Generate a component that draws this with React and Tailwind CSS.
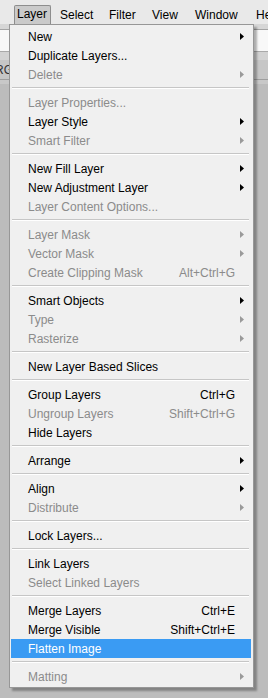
const font = { fontFamily: '"Liberation Sans", Arial, sans-serif' };

const groups = [
  [
    { label: 'New', sub: true },
    { label: 'Duplicate Layers...' },
    { label: 'Delete', sub: true, off: true },
  ],
  [
    { label: 'Layer Properties...', off: true },
    { label: 'Layer Style', sub: true },
    { label: 'Smart Filter', sub: true, off: true },
  ],
  [
    { label: 'New Fill Layer', sub: true },
    { label: 'New Adjustment Layer', sub: true },
    { label: 'Layer Content Options...', off: true },
  ],
  [
    { label: 'Layer Mask', sub: true, off: true },
    { label: 'Vector Mask', sub: true, off: true },
    { label: 'Create Clipping Mask', keys: 'Alt+Ctrl+G', off: true },
  ],
  [
    { label: 'Smart Objects', sub: true },
    { label: 'Type', sub: true, off: true },
    { label: 'Rasterize', sub: true, off: true },
  ],
  [{ label: 'New Layer Based Slices' }],
  [
    { label: 'Group Layers', keys: 'Ctrl+G' },
    { label: 'Ungroup Layers', keys: 'Shift+Ctrl+G', off: true },
    { label: 'Hide Layers' },
  ],
  [{ label: 'Arrange', sub: true }],
  [
    { label: 'Align', sub: true },
    { label: 'Distribute', sub: true, off: true },
  ],
  [{ label: 'Lock Layers...' }],
  [
    { label: 'Link Layers' },
    { label: 'Select Linked Layers', off: true },
  ],
  [
    { label: 'Merge Layers', keys: 'Ctrl+E' },
    { label: 'Merge Visible', keys: 'Shift+Ctrl+E' },
    { label: 'Flatten Image', active: true },
  ],
  [{ label: 'Matting', sub: true, off: true }],
];

function Arrow({ off }) {
  return (
    <svg width="4" height="7" viewBox="0 0 4 7">
      <polygon points="0,0 4,3.5 0,7" fill={off ? '#9a9a9a' : '#000'} />
    </svg>
  );
}

function Item({ item }) {
  const color = item.active ? 'text-white' : item.off ? 'text-[#8b8b8b]' : 'text-black';
  return (
    <div
      className={`flex items-center h-[19px] pl-[17px] pr-[7px] ml-[1px] mr-[2px] text-[12px] ${color} ${
        item.active ? 'bg-[#3a9bf3]' : ''
      }`}
    >
      <span className="flex-1 whitespace-nowrap">{item.label}</span>
      {item.keys && <span className="whitespace-nowrap">{item.keys}</span>}
      <div className="w-[9px] flex justify-end">{item.sub && <Arrow off={item.off} />}</div>
    </div>
  );
}

export default function App() {
  return (
    <div className="relative w-[268px] h-[698px] overflow-hidden bg-[#bcbcbc]" style={font}>
      {/* menu bar */}
      <div className="flex h-[24px] bg-[#e9e9e9] text-[12px] text-black">
        <div className="shrink-0 ml-[14px] mt-[5px] w-[37px] h-[19px] pl-[2px] bg-[#cacaca] border border-b-0 border-[#8d8d8d] rounded-t-[2px] leading-[17px]">
          Layer
        </div>
        <div className="shrink-0 ml-[9px] w-[49px] pt-[6px]">Select</div>
        <div className="shrink-0 w-[43px] pt-[6px]">Filter</div>
        <div className="shrink-0 w-[43px] pt-[6px]">View</div>
        <div className="shrink-0 w-[61px] pt-[6px]">Window</div>
        <div className="shrink-0 pt-[6px] whitespace-nowrap">Help</div>
      </div>

      {/* panels behind the menu */}
      <div className="h-[6px] bg-[#d6d6d6] border-b border-[#a4a4a4]" />
      <div className="h-[22px] bg-[#f8f8f8] border-b border-[#a9a9a9]" />
      <div className="h-[8px] bg-[#d2d2d2]" />
      <div className="h-[20px] bg-[#c6c6c6] border-b border-[#9e9e9e] text-[12px] leading-[20px] text-[#333] -indent-[5px] whitespace-nowrap">
        RGB/8)
      </div>
      <div className="h-[4px] bg-[#c8c8c8]" />

      {/* Layer menu */}
      <div className="absolute left-[9px] top-[24px] w-[245px] h-[664px] bg-[#f0f0f0] border border-[#979797] pt-[2px] shadow-[3px_3px_2px_rgba(0,0,0,0.3)]">
        {groups.map((g, gi) => (
          <div key={gi}>
            {gi > 0 && (
              <div className="h-[9px] pt-[3px] ml-[2px] mr-[4px]">
                <div className="border-t border-[#c6c6c6] border-b border-b-white" />
              </div>
            )}
            {g.map((item) => (
              <Item key={item.label} item={item} />
            ))}
          </div>
        ))}
      </div>
    </div>
  );
}
